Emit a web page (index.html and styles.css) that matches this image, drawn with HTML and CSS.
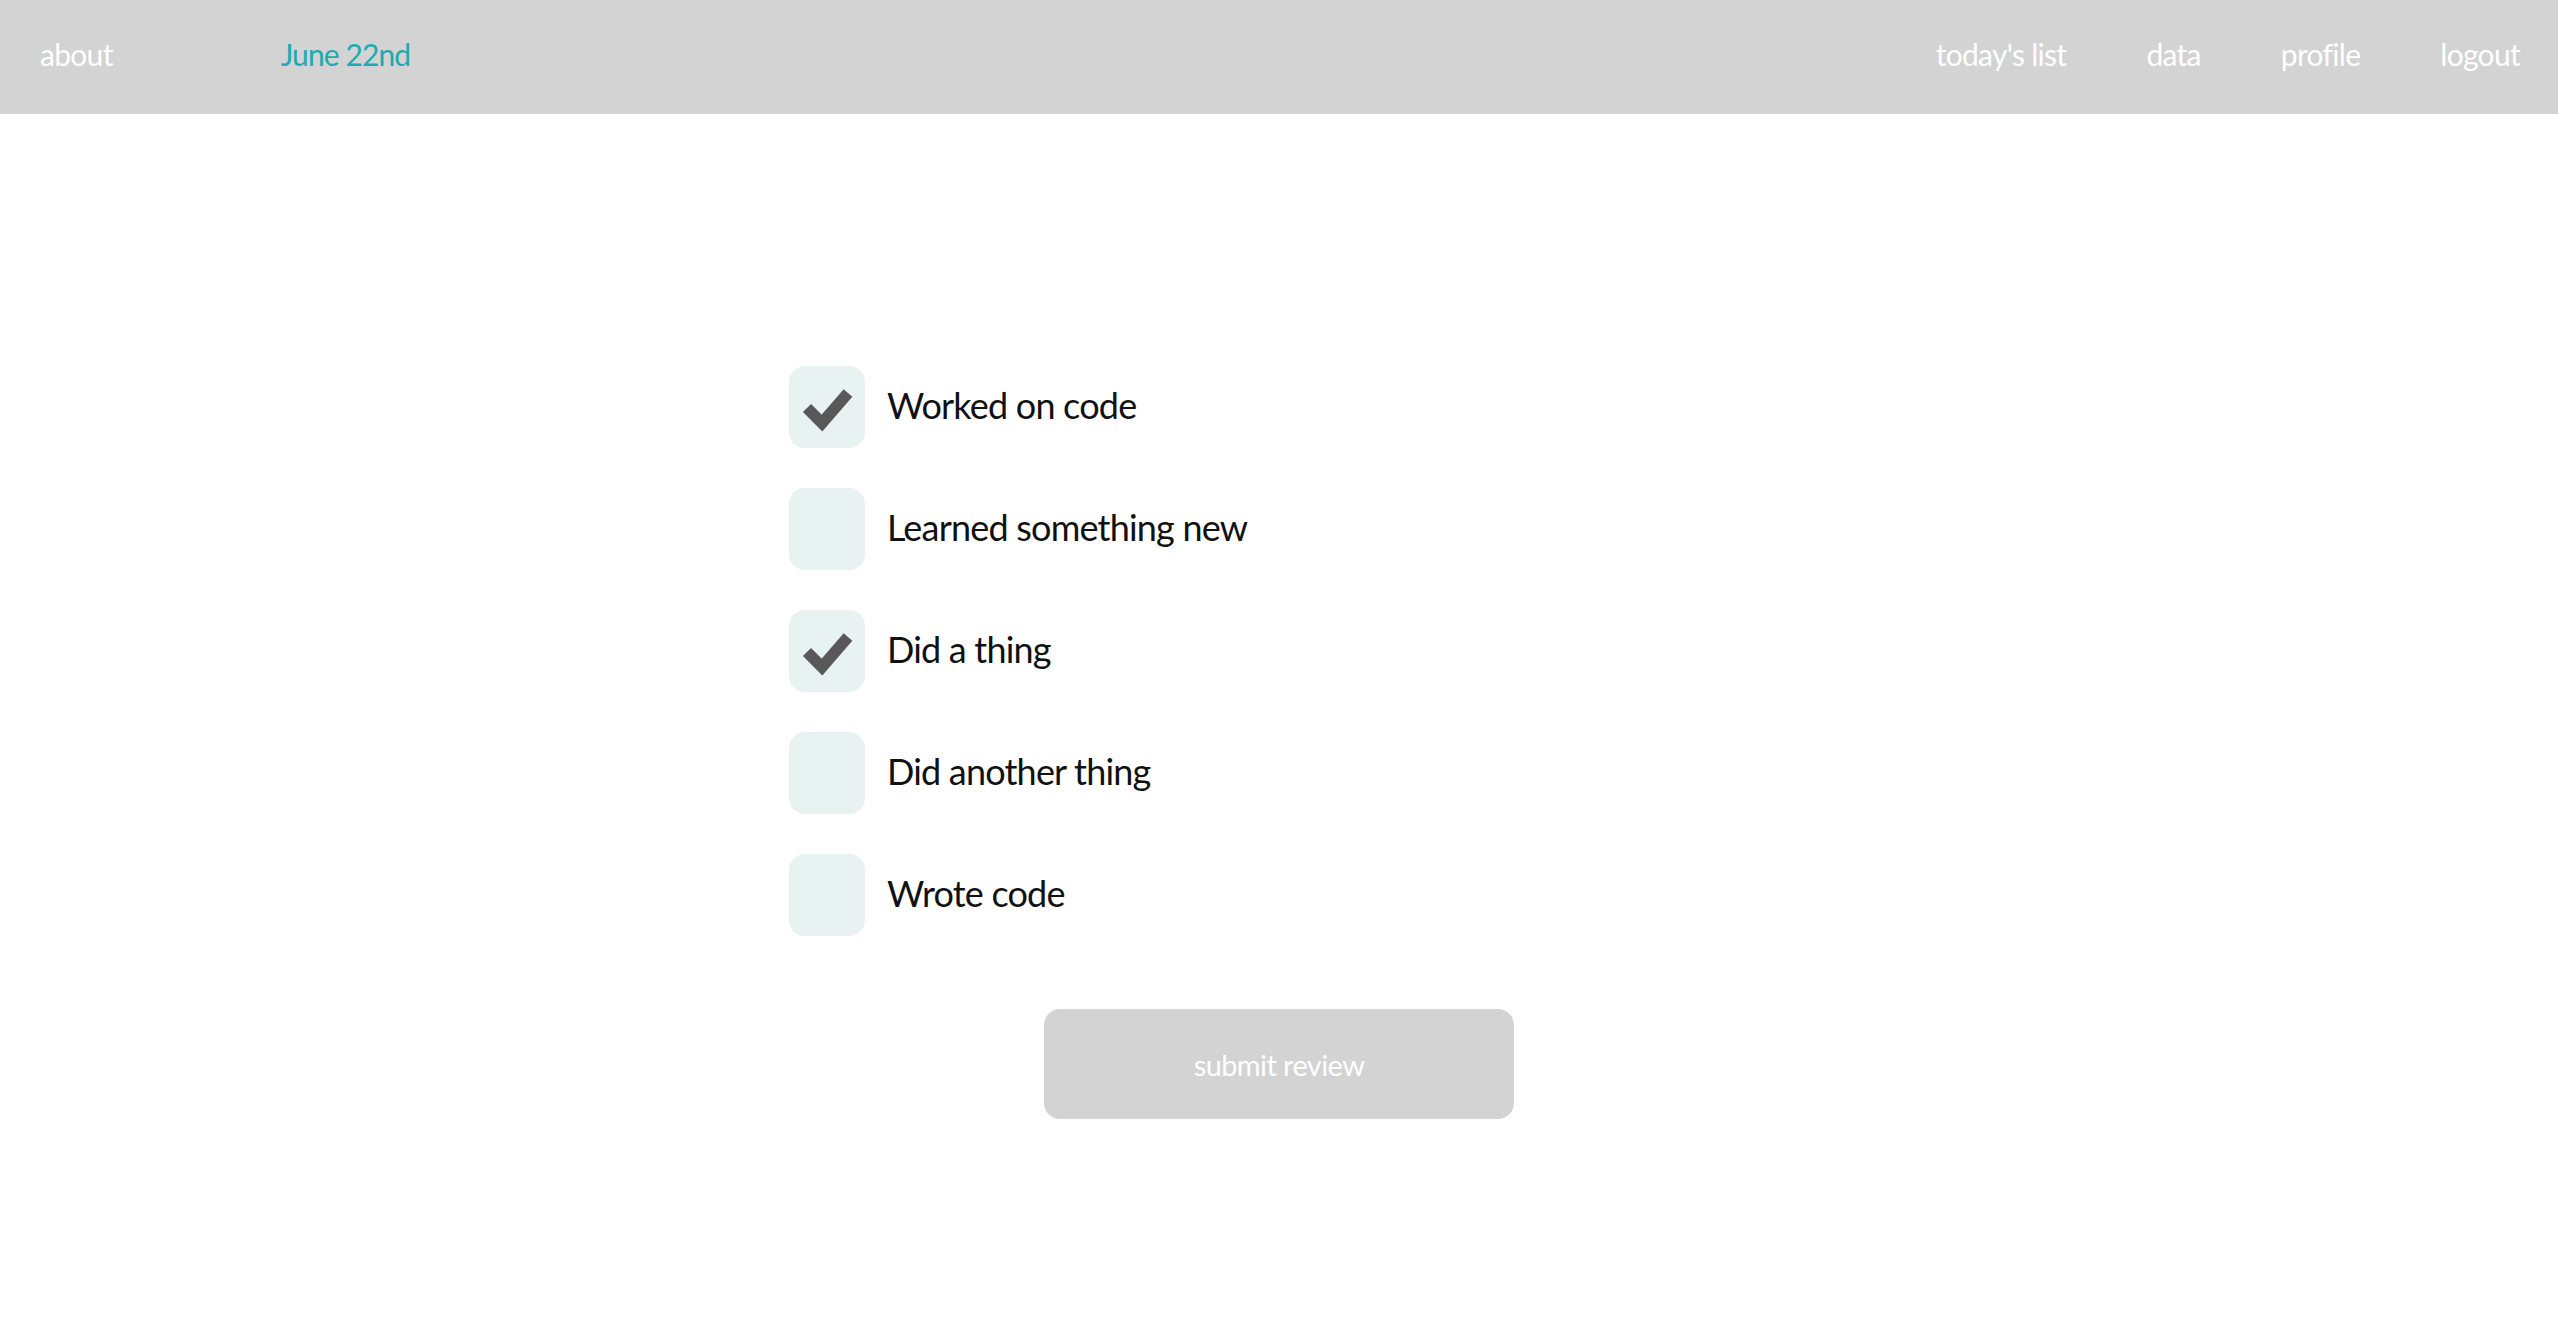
FILE: index.html
```html
<!DOCTYPE html>
<html lang="en">
<head>
<meta charset="utf-8">
<title>Daily review</title>
<link rel="stylesheet" href="styles.css">
</head>
<body>
<header class="topbar">
  <nav class="nav-left">
    <a class="nav-link" href="#">about</a>
    <span class="nav-date">June 22nd</span>
  </nav>
  <nav class="nav-right">
    <a class="nav-link" href="#">today's list</a>
    <a class="nav-link" href="#">data</a>
    <a class="nav-link" href="#">profile</a>
    <a class="nav-link" href="#">logout</a>
  </nav>
</header>
<main class="content">
  <form class="review">
    <ul class="checklist">
      <li class="item">
        <span class="box checked"><svg viewBox="0 0 76 82" width="76" height="82"><path d="M18 42 L33 57 L59 27" fill="none" stroke="#585858" stroke-width="11.5" stroke-linecap="butt" stroke-linejoin="miter"/></svg></span>
        <span class="label">Worked on code</span>
      </li>
      <li class="item">
        <span class="box"></span>
        <span class="label">Learned something new</span>
      </li>
      <li class="item">
        <span class="box checked"><svg viewBox="0 0 76 82" width="76" height="82"><path d="M18 42 L33 57 L59 27" fill="none" stroke="#585858" stroke-width="11.5" stroke-linecap="butt" stroke-linejoin="miter"/></svg></span>
        <span class="label">Did a thing</span>
      </li>
      <li class="item">
        <span class="box"></span>
        <span class="label">Did another thing</span>
      </li>
      <li class="item">
        <span class="box"></span>
        <span class="label">Wrote code</span>
      </li>
    </ul>
    <div class="actions">
      <button class="submit" type="button">submit review</button>
    </div>
  </form>
</main>
</body>
</html>
```
FILE: styles.css
```css
* { box-sizing: border-box; }
html, body { margin: 0; padding: 0; background: #ffffff; }
body {
  font-family: Lato, "Open Sans", sans-serif;
  color: #111111;
}
.topbar {
  height: 114px;
  background: #d3d3d3;
  display: flex;
  align-items: center;
  justify-content: space-between;
  padding: 0 38px 6px 40px;
}
.nav-left, .nav-right {
  display: flex;
  align-items: center;
}
.nav-right { gap: 80px; }
.nav-link {
  color: #ffffff;
  text-decoration: none;
  font-size: 30px;
  letter-spacing: -0.7px;
}
.nav-date {
  margin-left: 168px;
  color: #1fa9b1;
  font-size: 30px;
  letter-spacing: -0.9px;
}
.content {
  display: flex;
  justify-content: center;
  padding-top: 252px;
}
.review {
  width: 980px;
}
.checklist {
  list-style: none;
  margin: 0;
  padding: 0;
  display: flex;
  flex-direction: column;
  gap: 40px;
}
.item {
  display: flex;
  align-items: center;
  gap: 22px;
  height: 82px;
}
.box {
  width: 76px;
  height: 82px;
  border-radius: 16px;
  background: #e8f2f1;
  display: block;
  flex: none;
}
.box svg { display: block; }
.label {
  font-size: 36px;
  letter-spacing: -0.8px;
  color: #111111;
  padding-bottom: 4px;
}
.actions {
  display: flex;
  justify-content: center;
  margin-top: 73px;
}
.submit {
  width: 470px;
  height: 110px;
  border: none;
  border-radius: 16px;
  background: #d3d3d3;
  color: #ffffff;
  font-family: Lato, "Open Sans", sans-serif;
  font-size: 29px;
  letter-spacing: -0.6px;
  cursor: pointer;
}
```
